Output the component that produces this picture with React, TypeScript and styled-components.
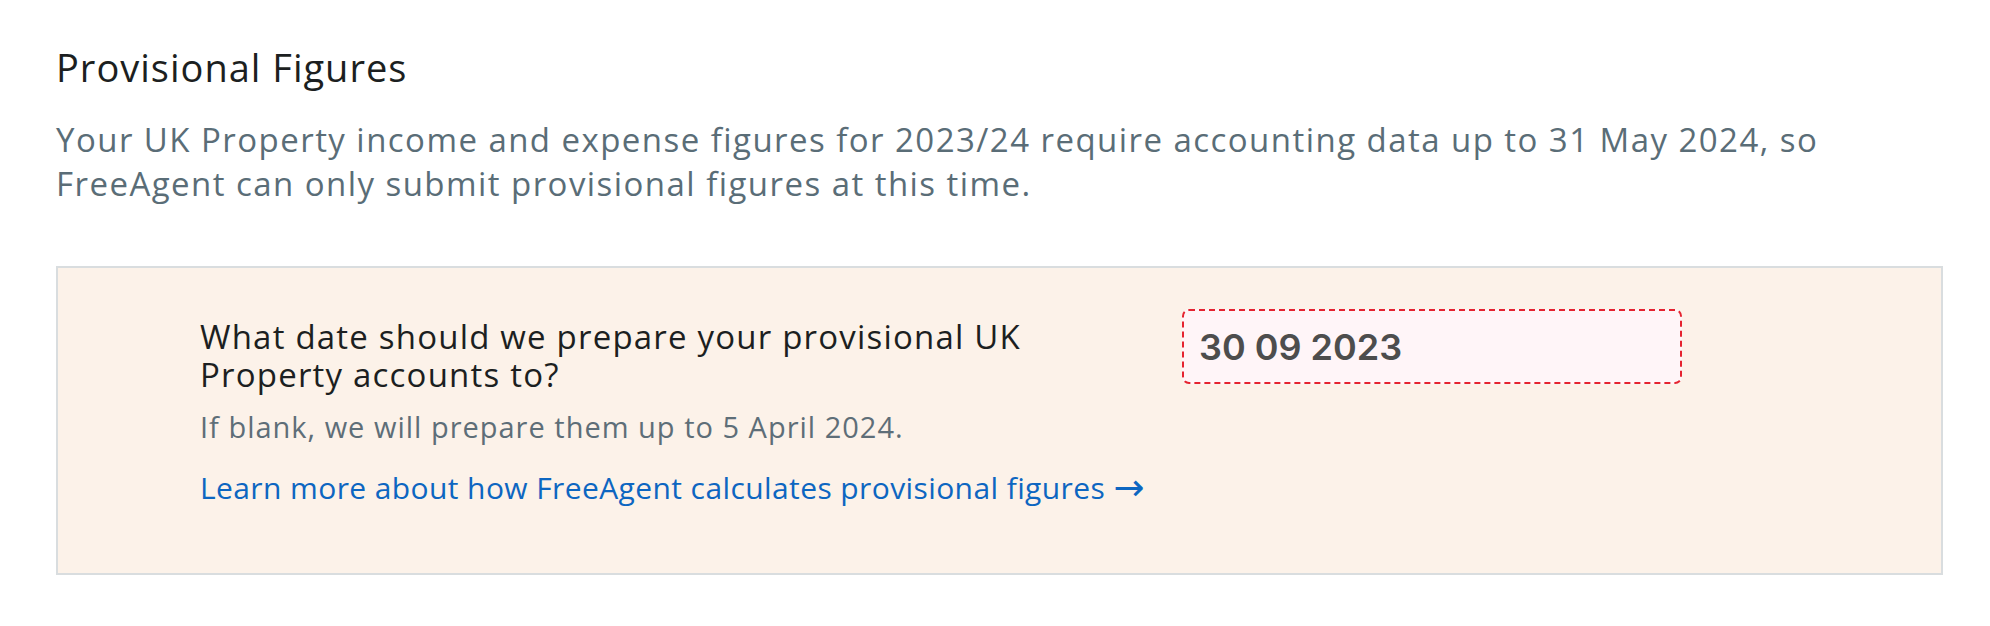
import React from "react";
import styled, { createGlobalStyle } from "styled-components";

const GlobalStyle = createGlobalStyle`
  html, body {
    margin: 0;
    padding: 0;
    background: #ffffff;
  }
  body {
    font-family: "Open Sans", "Noto Sans", sans-serif;
    -webkit-font-smoothing: antialiased;
  }
`;

const Page = styled.main`
  padding: 43px 47px 40px 56px;
`;

const Title = styled.h2`
  margin: 0;
  font-size: 38px;
  line-height: 48px;
  font-weight: 400;
  letter-spacing: 1px;
  color: #1c1f21;
`;

const Intro = styled.p`
  margin: 27px 0 0;
  font-size: 33px;
  line-height: 44px;
  letter-spacing: 1.45px;
  color: #5a6d77;
  max-width: 1830px;
`;

const Panel = styled.section`
  margin-top: 60px;
  background: #fcf2e9;
  border: 2px solid #d9dddf;
  padding: 41px 40px 66px 142px;
  display: grid;
  grid-template-columns: 962px 500px;
  column-gap: 20px;
  align-items: start;
`;

const LabelColumn = styled.div`
  display: flex;
  flex-direction: column;
  align-items: flex-start;
  padding-top: 9px;
`;

const Question = styled.label`
  max-width: 900px;
  font-size: 33px;
  line-height: 38px;
  letter-spacing: 1.2px;
  color: #1c1f21;
`;

const Hint = styled.p`
  margin: 14px 0 0;
  font-size: 29px;
  line-height: 38px;
  letter-spacing: 1px;
  color: #5e6e78;
`;

const LearnLink = styled.a`
  margin-top: 23px;
  font-size: 30px;
  line-height: 38px;
  letter-spacing: 0.4px;
  color: #0d66c1;
  text-decoration: none;
  white-space: nowrap;
`;

const Arrow = styled.span`
  font-family: "DejaVu Sans", "Liberation Sans", sans-serif;
  font-size: 37px;
  line-height: 0;
  letter-spacing: 0;
  vertical-align: -1px;
`;

const DateField = styled.div`
  box-sizing: border-box;
  width: 500px;
  height: 75px;
  border: 2px dashed #e52330;
  border-radius: 7px;
  background: #fff5f8;
  display: flex;
  align-items: center;
  padding: 0 15px;
  font-family: Inter, "Noto Sans", sans-serif;
  font-weight: 600;
  font-size: 36px;
  color: #4d4d4d;
`;

export default function App() {
  return (
    <>
      <GlobalStyle />
      <Page>
        <Title>Provisional Figures</Title>
        <Intro>
          Your UK Property income and expense figures for 2023/24 require accounting data up to 31 May 2024, so
          FreeAgent can only submit provisional figures at this time.
        </Intro>
        <Panel>
          <LabelColumn>
            <Question>What date should we prepare your provisional UK Property accounts to?</Question>
            <Hint>If blank, we will prepare them up to 5 April 2024.</Hint>
            <LearnLink href="#">
              Learn more about how FreeAgent calculates provisional figures <Arrow>→</Arrow>
            </LearnLink>
          </LabelColumn>
          <DateField>30 09 2023</DateField>
        </Panel>
      </Page>
    </>
  );
}
